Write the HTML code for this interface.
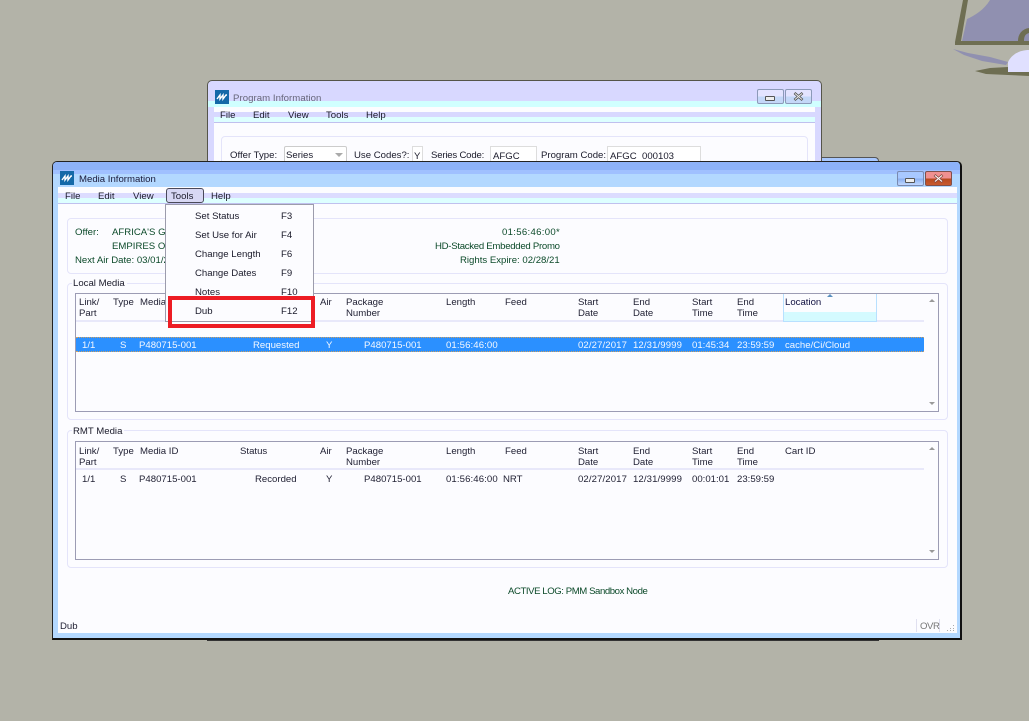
<!DOCTYPE html>
<html><head><meta charset="utf-8">
<style>
html,body{margin:0;padding:0;width:1029px;height:721px;overflow:hidden;background:#b3b3a8}
body{position:relative;font-family:"Liberation Sans",sans-serif;font-size:9.6px;color:#1a1a2a}
div,span.t{position:absolute;box-sizing:border-box}
.t{line-height:12px;white-space:pre;position:absolute}
.g{color:#0c4a2a}
.w{color:#f4f8ff}
.h{color:#222235}
.gb{border:1px solid #e4e4fa;border-radius:4px}
.btn{border:1px solid #8c9ab8;border-radius:2px}
</style></head><body>

<svg style="position:absolute;left:940px;top:0" width="89" height="80" viewBox="0 0 89 80">
<path d="M28 0 L50 0 C44 10 34 16 27 19 L22 41 L89 41 L89 0 Z" fill="#9090b0"/>
<path d="M23 0 L28 0 L21 41 L89 41 L89 45 L15 45 L15 42 Z" fill="#6e6e52"/>
<path d="M13 49 L28 53 L50 57 L68 62 L66 65 L42 61 L24 55 Z" fill="#9090b0"/>
<path d="M35 71 L50 68 L68 67 L89 67 L89 76 L68 75 L46 74 Z" fill="#6e6e52"/>
<path d="M68 62 C72 54 80 50 89 50 L89 72 L68 72 Z" fill="#e0e0ff"/>
<path d="M78 41 C78 34 82 29 89 28 L89 33 C85 34 84 37 84 41 Z" fill="#6e6e52"/>
</svg>

<!-- third window sliver -->
<div style="left:800px;top:157px;width:79px;height:10px;background:#a8c8ff;border:1px solid #555;border-bottom:0;border-radius:0 4px 0 0"></div>
<div style="left:207px;top:630px;width:672px;height:11px;background:#fff;border:1px solid #333;border-top:0"></div>

<!-- Program Information window -->
<div style="left:207px;top:80px;width:615px;height:90px;background:#d8d8ff;border:1px solid #55554a;border-bottom:0;border-radius:5px 5px 0 0"></div>
<div style="left:208px;top:101px;width:613px;height:6px;background:#d0ffff"></div>
<div style="left:214px;top:107px;width:601px;height:5px;background:#fcfcff"></div>
<div style="left:214px;top:112px;width:601px;height:5px;background:#d8d8ff"></div>
<div style="left:214px;top:117px;width:601px;height:5px;background:#ddffff"></div>
<div style="left:208px;top:107px;width:6px;height:60px;background:#d8d8ff"></div>
<div style="left:815px;top:107px;width:6px;height:60px;background:#d8d8ff"></div>
<div style="left:214px;top:122px;width:601px;height:48px;background:#fcfcff;border-top:1px solid #c0c0ee"></div>
<svg style="position:absolute;left:215px;top:90px" width="14" height="14"><rect width="14" height="14" fill="#1469a8"/><path d="M2 9L5 5V9L8 5V9L11 5L12 5" fill="none" stroke="#fff" stroke-width="1.4"/></svg>
<span class="t" style="left:233px;top:93px;color:#66667a;letter-spacing:.05px">Program Information</span>
<span class="t" style="left:220px;top:110px">File</span>
<span class="t" style="left:253px;top:110px">Edit</span>
<span class="t" style="left:288px;top:110px">View</span>
<span class="t" style="left:326px;top:110px">Tools</span>
<span class="t" style="left:366px;top:110px">Help</span>
<div class="btn" style="left:757px;top:89px;width:27px;height:15px;background:linear-gradient(#e4e4ff 45%,#c4d8f8 55%)"></div>
<div style="left:765px;top:96px;width:10px;height:5px;border:1px solid #555;border-radius:1px;background:#eee"></div>
<div class="btn" style="left:785px;top:89px;width:27px;height:15px;background:linear-gradient(#e4e4ff 45%,#c4d8f8 55%)"></div>
<svg style="position:absolute;left:793px;top:92px" width="11" height="9"><path d="M1.5 1L9.5 8M9.5 1L1.5 8" stroke="#555" stroke-width="2.6"/><path d="M2 1.5L9 7.5M9 1.5L2 7.5" stroke="#eee" stroke-width="1"/></svg>
<div class="gb" style="left:221px;top:136px;width:587px;height:40px"></div>
<span class="t" style="left:230px;top:150px">Offer Type:</span>
<div style="left:284px;top:146px;width:63px;height:20px;background:#fff;border:1px solid #ccc;border-radius:2px"></div>
<span class="t" style="left:286px;top:150px">Series</span>
<div style="left:335px;top:153px;border:4px solid transparent;border-top:4px solid #aaa"></div>
<span class="t" style="left:354px;top:150px">Use Codes?:</span>
<div style="left:412px;top:146px;width:11px;height:20px;background:#fff;border:1px solid #ddd"></div>
<span class="t" style="left:414px;top:151px">Y</span>
<span class="t" style="left:431px;top:150px;letter-spacing:-.2px">Series Code:</span>
<div style="left:490px;top:146px;width:47px;height:20px;background:#fff;border:1px solid #ddd"></div>
<span class="t" style="left:493px;top:151px">AFGC</span>
<span class="t" style="left:541px;top:150px">Program Code:</span>
<div style="left:607px;top:146px;width:94px;height:20px;background:#fff;border:1px solid #ddd"></div>
<span class="t" style="left:610px;top:151px">AFGC&#160;&#160;000103</span>

<!-- Media Information main window -->
<div style="left:52px;top:161px;width:910px;height:479px;background:#b3d8ff;border:1px solid #222;border-right:2px solid #111;border-bottom:2px solid #111;border-radius:5px 5px 0 0"></div>
<div style="left:53px;top:162px;width:907px;height:8px;background:#8db2f8;border-radius:4px 4px 0 0"></div>
<div style="left:53px;top:170px;width:907px;height:4px;background:#a0c0ff"></div>
<div style="left:58px;top:187px;width:899px;height:6px;background:#fcfcff"></div>
<div style="left:58px;top:193px;width:899px;height:5px;background:#dcdcff"></div>
<div style="left:58px;top:198px;width:899px;height:5px;background:#ddffff"></div>
<div style="left:58px;top:203px;width:899px;height:430px;background:#fcfcff;border-top:1px solid #c0c0ee"></div>

<svg style="position:absolute;left:60px;top:171px" width="14" height="14"><rect width="14" height="14" fill="#1469a8"/><path d="M2 9L5 5V9L8 5V9L11 5L12 5" fill="none" stroke="#fff" stroke-width="1.4"/></svg>
<span class="t" style="left:79px;top:174px;color:#1a1a3a">Media Information</span>
<div class="btn" style="left:897px;top:171px;width:27px;height:15px;background:linear-gradient(#a8c8ff 45%,#8cb0f0 55%,#c0d8ff);border-color:#7a8ab0"></div>
<div style="left:905px;top:178px;width:10px;height:5px;border:1px solid #555;border-radius:1px;background:#eee"></div>
<div class="btn" style="left:925px;top:171px;width:27px;height:15px;background:linear-gradient(#f09090 45%,#b84a20 55%,#c85a30);border-color:#80504a"></div>
<svg style="position:absolute;left:933px;top:174px" width="11" height="9"><path d="M1.5 1L9.5 8M9.5 1L1.5 8" stroke="#8a4a40" stroke-width="2.6"/><path d="M2 1.5L9 7.5M9 1.5L2 7.5" stroke="#fff" stroke-width="1.1"/></svg>

<span class="t" style="left:65px;top:191px">File</span>
<span class="t" style="left:98px;top:191px">Edit</span>
<span class="t" style="left:133px;top:191px">View</span>
<div style="left:166px;top:188px;width:38px;height:15px;background:#d8d8f4;border:1px solid #4a4a5a;border-radius:3px"></div>
<span class="t" style="left:171px;top:191px">Tools</span>
<span class="t" style="left:211px;top:191px">Help</span>

<!-- Offer group -->
<div class="gb" style="left:67px;top:218px;width:881px;height:56px"></div>
<span class="t g" style="left:75px;top:227px">Offer:</span>
<span class="t g" style="left:112px;top:227px">AFRICA'S GREAT</span>
<span class="t g" style="left:112px;top:241px">EMPIRES OF AFRICA</span>
<span class="t g" style="left:75px;top:255px">Next Air Date: 03/01/21</span>
<span class="t g" style="left:502px;top:227px;letter-spacing:.3px">01:56:46:00*</span>
<span class="t g" style="left:435px;top:241px;letter-spacing:-.28px">HD-Stacked Embedded Promo</span>
<span class="t g" style="left:460px;top:255px">Rights Expire: 02/28/21</span>

<!-- Local Media -->
<div class="gb" style="left:67px;top:283px;width:881px;height:137px"></div>
<span class="t" style="left:72px;top:278px;background:#fcfcff;padding:0 2px 0 1px">Local Media</span>
<div style="left:75px;top:293px;width:864px;height:119px;border:1px solid #9c9cb4;background:#fcfcff"></div>
<div style="left:76px;top:320px;width:848px;height:2px;background:#e8e8fa"></div>
<div style="left:783px;top:294px;width:94px;height:28px;background:#fcfcff;border-left:1px solid #b8e0ff;border-right:1px solid #b8e0ff;border-bottom:1px solid #b8e0ff"></div>
<div style="left:784px;top:312px;width:92px;height:9px;background:#d4faff"></div>
<div style="left:827px;top:294px;border:3px solid transparent;border-bottom:3px solid #5a90c0;border-top:0"></div>
<span class="t h" style="left:79px;top:297px">Link/</span><span class="t h" style="left:79px;top:308px">Part</span>
<span class="t h" style="left:113px;top:297px">Type</span>
<span class="t h" style="left:140px;top:297px">Media ID</span>
<span class="t h" style="left:320px;top:297px">Air</span>
<span class="t h" style="left:346px;top:297px">Package</span><span class="t h" style="left:346px;top:308px">Number</span>
<span class="t h" style="left:446px;top:297px">Length</span>
<span class="t h" style="left:505px;top:297px">Feed</span>
<span class="t h" style="left:578px;top:297px">Start</span><span class="t h" style="left:578px;top:308px">Date</span>
<span class="t h" style="left:633px;top:297px">End</span><span class="t h" style="left:633px;top:308px">Date</span>
<span class="t h" style="left:692px;top:297px">Start</span><span class="t h" style="left:692px;top:308px">Time</span>
<span class="t h" style="left:737px;top:297px">End</span><span class="t h" style="left:737px;top:308px">Time</span>
<span class="t" style="left:785px;top:297px;color:#101040">Location</span>
<div style="left:929px;top:299px;border:3px solid transparent;border-bottom:3px solid #999;border-top:0"></div>
<div style="left:929px;top:402px;border:3px solid transparent;border-top:3px solid #999;border-bottom:0"></div>

<div style="left:76px;top:337px;width:848px;height:15px;background:#2b90ff;border-top:1px dotted #d0a060;border-bottom:1px dotted #d0a060"></div>
<span class="t w" style="left:82px;top:340px">1/1</span>
<span class="t w" style="left:120px;top:340px">S</span>
<span class="t w" style="left:139px;top:340px">P480715-001</span>
<span class="t w" style="left:253px;top:340px">Requested</span>
<span class="t w" style="left:326px;top:340px">Y</span>
<span class="t w" style="left:364px;top:340px">P480715-001</span>
<span class="t w" style="left:446px;top:340px;letter-spacing:.1px">01:56:46:00</span>
<span class="t w" style="left:578px;top:340px;letter-spacing:.1px">02/27/2017</span>
<span class="t w" style="left:633px;top:340px;letter-spacing:.1px">12/31/9999</span>
<span class="t w" style="left:692px;top:340px">01:45:34</span>
<span class="t w" style="left:737px;top:340px">23:59:59</span>
<span class="t w" style="left:785px;top:340px">cache/Ci/Cloud</span>

<!-- RMT Media -->
<div class="gb" style="left:67px;top:430px;width:881px;height:138px"></div>
<span class="t" style="left:72px;top:426px;background:#fcfcff;padding:0 2px 0 1px">RMT Media</span>
<div style="left:75px;top:441px;width:864px;height:119px;border:1px solid #9c9cb4;background:#fcfcff"></div>
<div style="left:76px;top:468px;width:848px;height:2px;background:#e8e8fa"></div>
<span class="t h" style="left:79px;top:446px">Link/</span><span class="t h" style="left:79px;top:457px">Part</span>
<span class="t h" style="left:113px;top:446px">Type</span>
<span class="t h" style="left:140px;top:446px">Media ID</span>
<span class="t h" style="left:240px;top:446px">Status</span>
<span class="t h" style="left:320px;top:446px">Air</span>
<span class="t h" style="left:346px;top:446px">Package</span><span class="t h" style="left:346px;top:457px">Number</span>
<span class="t h" style="left:446px;top:446px">Length</span>
<span class="t h" style="left:505px;top:446px">Feed</span>
<span class="t h" style="left:578px;top:446px">Start</span><span class="t h" style="left:578px;top:457px">Date</span>
<span class="t h" style="left:633px;top:446px">End</span><span class="t h" style="left:633px;top:457px">Date</span>
<span class="t h" style="left:692px;top:446px">Start</span><span class="t h" style="left:692px;top:457px">Time</span>
<span class="t h" style="left:737px;top:446px">End</span><span class="t h" style="left:737px;top:457px">Time</span>
<span class="t h" style="left:785px;top:446px">Cart ID</span>
<span class="t h" style="left:82px;top:474px">1/1</span>
<span class="t h" style="left:120px;top:474px">S</span>
<span class="t h" style="left:139px;top:474px">P480715-001</span>
<span class="t h" style="left:255px;top:474px">Recorded</span>
<span class="t h" style="left:326px;top:474px">Y</span>
<span class="t h" style="left:364px;top:474px">P480715-001</span>
<span class="t h" style="left:446px;top:474px;letter-spacing:.1px">01:56:46:00</span>
<span class="t h" style="left:503px;top:474px">NRT</span>
<span class="t h" style="left:578px;top:474px;letter-spacing:.1px">02/27/2017</span>
<span class="t h" style="left:633px;top:474px;letter-spacing:.1px">12/31/9999</span>
<span class="t h" style="left:692px;top:474px">00:01:01</span>
<span class="t h" style="left:737px;top:474px">23:59:59</span>
<div style="left:929px;top:447px;border:3px solid transparent;border-bottom:3px solid #999;border-top:0"></div>
<div style="left:929px;top:550px;border:3px solid transparent;border-top:3px solid #999;border-bottom:0"></div>

<span class="t g" style="left:508px;top:586px;letter-spacing:-.43px">ACTIVE LOG: PMM Sandbox Node</span>
<span class="t h" style="left:60px;top:621px">Dub</span>
<div style="left:916px;top:619px;width:24px;height:13px;border-left:1px solid #e0e0f0;border-right:1px solid #e0e0f0"></div>
<span class="t" style="left:920px;top:621px;color:#777;letter-spacing:-.4px">OVR</span>
<svg style="position:absolute;left:946px;top:624px" width="9" height="8"><path d="M7 1h1v1h-1zM7 4h1v1h-1zM4 4h1v1h-1zM7 6h1v1h-1zM4 6h1v1h-1zM1 6h1v1h-1z" fill="#aaa"/></svg>

<!-- Tools menu -->
<div style="left:165px;top:204px;width:149px;height:118px;background:#fcfcff;border:1px solid #9c9cac"></div>
<span class="t" style="left:195px;top:211px">Set Status</span><span class="t" style="left:281px;top:211px">F3</span>
<span class="t" style="left:195px;top:230px">Set Use for Air</span><span class="t" style="left:281px;top:230px">F4</span>
<span class="t" style="left:195px;top:249px">Change Length</span><span class="t" style="left:281px;top:249px">F6</span>
<span class="t" style="left:195px;top:268px">Change Dates</span><span class="t" style="left:281px;top:268px">F9</span>
<span class="t" style="left:195px;top:287px">Notes</span><span class="t" style="left:281px;top:287px">F10</span>
<span class="t" style="left:195px;top:306px">Dub</span><span class="t" style="left:281px;top:306px">F12</span>
<div style="left:168px;top:296px;width:147px;height:32px;border:4px solid #ed1c24"></div>

</body></html>
